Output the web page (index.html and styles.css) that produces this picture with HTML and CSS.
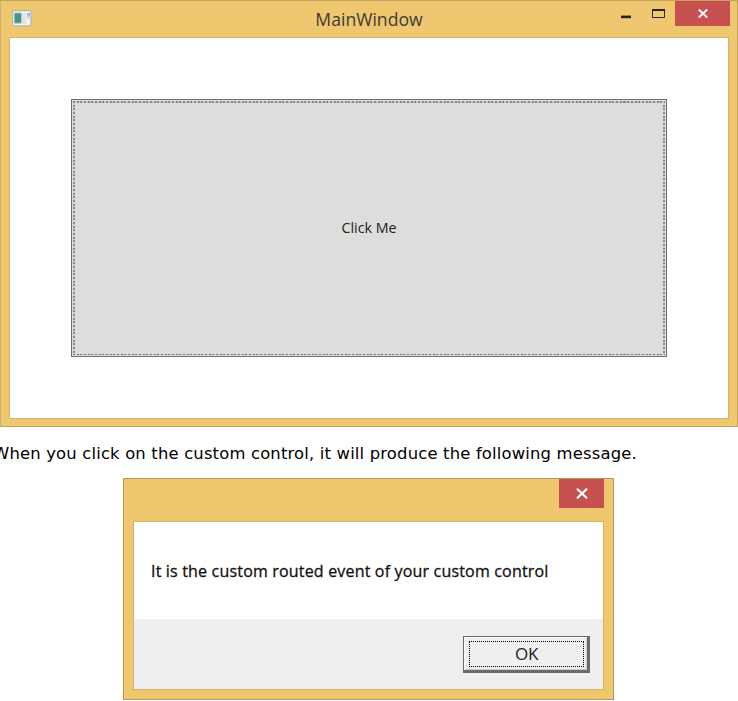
FILE: index.html
```html
<!DOCTYPE html>
<html lang="en">
<head>
<meta charset="utf-8">
<title>MainWindow</title>
<link rel="stylesheet" href="styles.css">
</head>
<body>
<section class="window">
  <header class="titlebar">
    <svg class="app-icon" width="20" height="17" viewBox="0 0 20 17">
      <defs>
        <linearGradient id="pane" x1="0" y1="0" x2="0.5" y2="1"><stop offset="0" stop-color="#4f86b4"/><stop offset="1" stop-color="#3f9d67"/></linearGradient>
        <linearGradient id="side" x1="0" y1="0" x2="0" y2="1"><stop offset="0" stop-color="#7ba9d8"/><stop offset="1" stop-color="#f2f5ec"/></linearGradient>
      </defs>
      <rect x="0.7" y="0.7" width="18.4" height="15.2" rx="1.2" fill="#f4f4f0" stroke="#b7b4a8" stroke-width="1.2"/>
      <rect x="2" y="2.6" width="7.6" height="11" fill="#9cbcbc"/>
      <rect x="3" y="3.5" width="6" height="9.2" fill="url(#pane)"/>
      <rect x="10" y="3" width="4" height="11" fill="#e4e3e1"/>
      <rect x="15" y="3" width="3" height="7" fill="url(#side)"/>
    </svg>
    <h1 class="title">MainWindow</h1>
    <div class="controls">
      <svg width="55" height="26" viewBox="0 0 55 26">
        <rect x="1" y="14.6" width="10" height="2.6" fill="#28251f"/>
        <path d="M32.5 8.5H44.5V16.5H32.5Z" fill="none" stroke="#28251f"/>
        <path d="M32 9H45" stroke="#28251f" stroke-width="2"/>
      </svg>
      <button class="close" aria-label="Close"><svg width="10" height="9" viewBox="0 0 10 9"><path d="M.8 .5L9.2 8.5M9.2 .5L.8 8.5" stroke="#fff" stroke-width="1.9"/></svg></button>
    </div>
  </header>
  <div class="client">
    <button class="big-button"><span class="focus"><span class="big-label">Click Me</span></span></button>
  </div>
</section>
<p class="caption">When you click on the custom control, it will produce the following message.</p>
<section class="dialog">
  <header class="dialog-bar">
    <button class="close dialog-close" aria-label="Close"><svg width="12" height="11" viewBox="0 0 12 11"><path d="M1 .7L11 10.3M11 .7L1 10.3" stroke="#fff" stroke-width="2.1"/></svg></button>
  </header>
  <div class="dialog-client">
    <div class="message"><span>It is the custom routed event of your custom control</span></div>
    <footer class="actions"><button class="ok"><span class="ok-focus">OK</span></button></footer>
  </div>
</section>
</body>
</html>
```
FILE: styles.css
```css
* { box-sizing: border-box; }
body { margin: 0; width: 738px; height: 701px; overflow: hidden; background: #fff; font-family: "Open Sans", sans-serif; }
button { margin: 0; padding: 0; border: 0; font: inherit; color: inherit; }
svg { display: block; flex: none; }

.window {
  height: 427px;
  padding: 0 8px 8px;
  background: #eec76f;
  border: 1px solid #c4a25a;
  border-left-color: #cdb072;
}
.titlebar { display: grid; grid-template-columns: 1fr auto 1fr; height: 36px; }
.app-icon { margin: 9px 0 0 3px; }
.title { margin: 6px 0 0; font-size: 17.6px; font-weight: 400; line-height: 24px; color: #3e3b34; }
.controls { display: flex; justify-content: flex-end; margin-right: -1px; }
.close { display: flex; align-items: center; justify-content: center; width: 55px; height: 25px; background: #c75050; }
.client {
  height: 382px;
  padding: 61px 61px 0;
  background: #fff;
  border: 1px solid #d4b365;
}
.big-button { display: block; width: 596px; height: 258px; padding: 1px; background: #ddd; border: 1px solid #707070; outline: 0; }
.focus {
  display: flex;
  align-items: center;
  justify-content: center;
  height: 100%;
  padding-bottom: 2px;
  background:
    repeating-linear-gradient(90deg, #8c8c8c 0 2px, #c8c8c8 2px 3.67px) 0 0 / 100% 2px no-repeat,
    repeating-linear-gradient(90deg, #777 0 2px, #c8c8c8 2px 3.67px) 0 100% / 100% 1px no-repeat,
    repeating-linear-gradient(#8c8c8c 0 2px, #d0d0d0 2px 3.67px) 0 0 / 2px 100% no-repeat,
    repeating-linear-gradient(#8c8c8c 0 2px, #d0d0d0 2px 3.67px) 100% 0 / 2px 100% no-repeat;
}
.big-label { font-size: 14.3px; color: #222; }

.caption { margin: 15px 0 0 -7px; height: 24px; line-height: 24px; font-family: "DejaVu Sans", sans-serif; font-size: 16.4px; letter-spacing: 0.18px; color: #000; white-space: nowrap; }

.dialog {
  width: 491px;
  height: 222px;
  margin: 12px 0 0 123px;
  padding: 0 9px 9px;
  background: #eec76f;
  border: 1px solid #b89a55;
}
.dialog-bar { display: flex; justify-content: flex-end; height: 42px; }
.dialog-close { width: 45px; height: 29px; }
.dialog-client { height: 169px; border: 1px solid #d4b365; background: #fff; }
.message { display: flex; align-items: center; height: 97px; padding-left: 17px; font-size: 16px; letter-spacing: 0.18px; color: #111; -webkit-text-stroke: 0.3px #111; white-space: nowrap; }
.actions { display: flex; justify-content: flex-end; height: 70px; padding: 17px 13px 0 0; background: #efefef; }
.ok {
  width: 127px;
  height: 37px;
  padding: 4px 3px 3px 5px;
  background: #efefef;
  border: solid #6b6b6b;
  border-width: 1px 3px 3px 1px;
  box-shadow: inset 1px 1px #fff, inset -1px -1px #ccc;
}
.ok-focus { display: flex; align-items: center; justify-content: center; height: 100%; padding-bottom: 2px; border: 1px dotted #000; font-size: 17px; letter-spacing: -0.4px; color: #222; }
```
